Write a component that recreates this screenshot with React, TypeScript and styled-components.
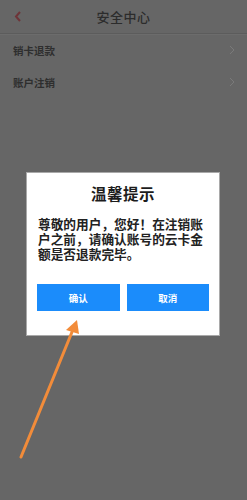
import React from 'react'
import styled, { createGlobalStyle } from 'styled-components'

const GlobalStyle = createGlobalStyle`
    html, body {
        margin: 0;
        padding: 0;
        background: #666666;
    }
    body {
        font-family: "Noto Sans CJK SC", "Noto Sans", sans-serif;
    }
`

const Page = styled.div`
    position: relative;
    width: 247px;
    height: 500px;
    overflow: hidden;
    background: #666666;
`

const Header = styled.div`
    position: relative;
    height: 33px;
    display: flex;
    align-items: center;
    justify-content: center;
    border-bottom: 1px solid #5c5c5c;
    box-shadow: 0 1px 0 #6c6c6c;
`

const BackIcon = styled.svg`
    position: absolute;
    left: 14px;
    top: 11px;
`

const Title = styled.h1`
    margin: 0;
    font-size: 13px;
    font-weight: 500;
    color: #2c2c2c;
    letter-spacing: 0.5px;
`

const Row = styled.div`
    height: 32px;
    display: flex;
    align-items: center;
    justify-content: space-between;
    padding: 0 12px 0 13px;
    font-size: 10.5px;
    font-weight: 700;
    color: #2e2e2e;
`

const Backdrop = styled.div`
    position: absolute;
    inset: 0;
`

const Dialog = styled.div`
    position: absolute;
    left: 26px;
    top: 172px;
    width: 194px;
    height: 164px;
    box-sizing: border-box;
    background: #ffffff;
    border: 1px solid #a9a9a9;
    padding: 9px 10px 0 10px;
    display: flex;
    flex-direction: column;
`

const DialogTitle = styled.div`
    text-align: center;
    font-size: 15.5px;
    line-height: 22px;
    font-weight: 700;
    color: #1c1c1c;
    letter-spacing: 0.5px;
`

const DialogBody = styled.p`
    margin: 12px 0 0 1px;
    font-size: 12.7px;
    line-height: 15px;
    font-weight: 700;
    color: #222222;
    word-break: break-all;
`

const Buttons = styled.div`
    margin-top: auto;
    margin-bottom: 24px;
    display: flex;
    gap: 7px;
`

const Button = styled.div`
    flex: 1;
    height: 27px;
    background: #1b8cfb;
    color: #ffffff;
    font-size: 9.5px;
    font-weight: 700;
    display: flex;
    align-items: center;
    justify-content: center;
`

const Arrow = styled.svg`
    position: absolute;
    left: 0;
    top: 0;
    pointer-events: none;
`

const Chevron = () => (
    <svg width="6" height="10" viewBox="0 0 6 10">
        <path d="M1 1 L5 5 L1 9" fill="none" stroke="#7a7a7a" strokeWidth="1" />
    </svg>
)

export default function App() {
    return (
        <Page>
            <GlobalStyle />
            <Header>
                <BackIcon width="8" height="11" viewBox="0 0 8 11">
                    <path d="M6 1 L2 5.5 L6 10" fill="none" stroke="#6e3438" strokeWidth="2" />
                </BackIcon>
                <Title>安全中心</Title>
            </Header>
            <Row>
                <span>销卡退款</span>
                <Chevron />
            </Row>
            <Row>
                <span>账户注销</span>
                <Chevron />
            </Row>
            <Backdrop>
                <Dialog>
                    <DialogTitle>温馨提示</DialogTitle>
                    <DialogBody>尊敬的用户，您好！在注销账户之前，请确认账号的云卡金额是否退款完毕。</DialogBody>
                    <Buttons>
                        <Button>确认</Button>
                        <Button>取消</Button>
                    </Buttons>
                </Dialog>
                <Arrow width="247" height="500" viewBox="0 0 247 500">
                    <line x1="21" y1="457" x2="72" y2="332" stroke="#f28c3a" strokeWidth="3" strokeLinecap="round" />
                    <path d="M77 320 L79 334 L66 330 Z" fill="#f28c3a" />
                </Arrow>
            </Backdrop>
        </Page>
    )
}
